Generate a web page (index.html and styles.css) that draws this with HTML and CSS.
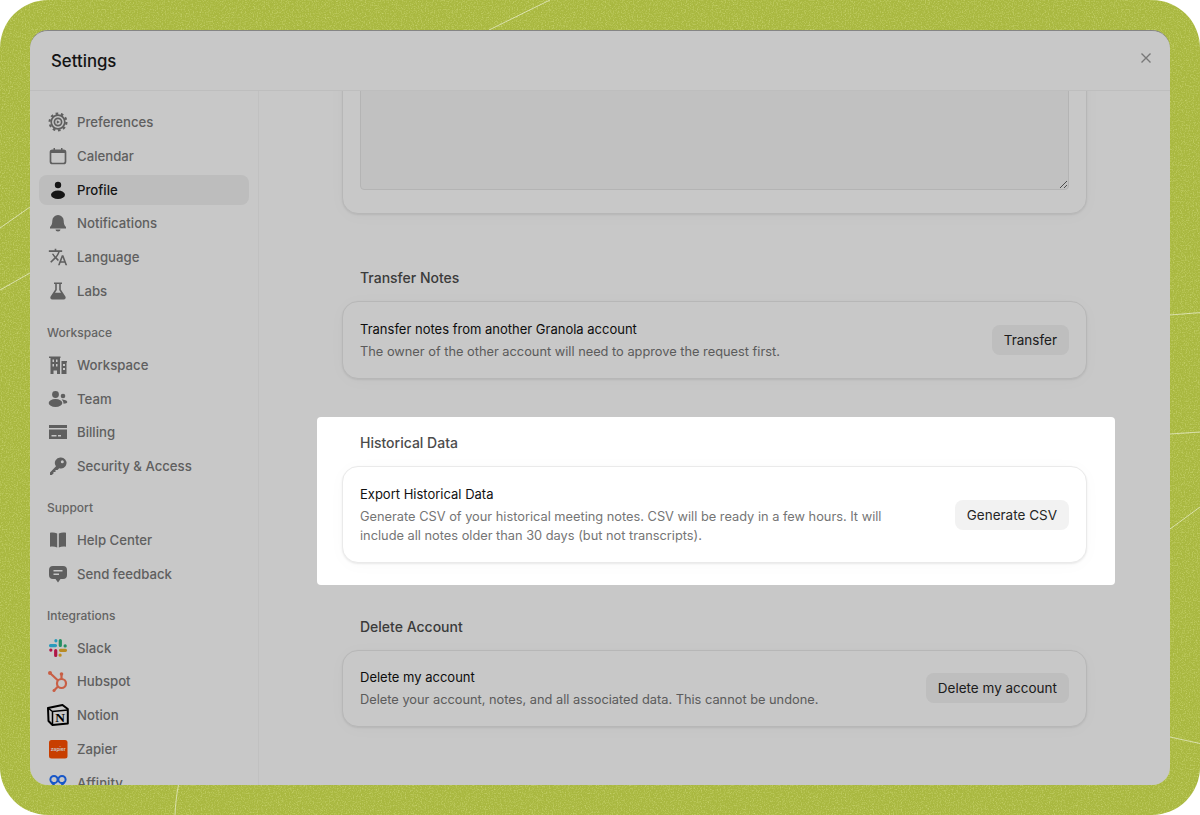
FILE: index.html
```html
<!DOCTYPE html>
<html lang="en">
<head>
<meta charset="utf-8">
<title>Settings</title>
<link rel="stylesheet" href="styles.css">
</head>
<body>
<div class="stage">
  <svg class="backdrop" width="1200" height="815" viewBox="0 0 1200 815" aria-hidden="true">
    <defs>
      <filter id="grain" x="0" y="0" width="100%" height="100%">
        <feTurbulence type="fractalNoise" baseFrequency="0.75" numOctaves="2" seed="4"/>
        <feColorMatrix type="matrix" values="0 0 0 0 0.95  0 0 0 0 1  0 0 0 0 0.5  1.6 0 0 0 -0.72"/>
      </filter>
    </defs>
    <rect class="grain" width="1200" height="815" filter="url(#grain)"/>
    <g class="streaks">
      <path d="M0 228L30 207"/>
      <path d="M0 290L30 273"/>
      <path d="M1170 315L1200 312.6"/>
      <path d="M1170 434L1200 432"/>
      <path d="M1170 529L1200 507"/>
      <path d="M1170 737L1200 743.5"/>
      <path d="M489 30L550 0"/>
      <path d="M178.500 785C176.500 795 175.500 805 175 815"/>
    </g>
  </svg>

  <div class="modal">
    <header class="modal-head">
      <h1 class="modal-title">Settings</h1>
      <button class="close" type="button" aria-label="Close">
        <svg width="10" height="10" viewBox="0 0 10 10"><path d="M.5.500l9 9M9.500.500l-9 9"/></svg>
      </button>
    </header>

    <div class="modal-body">
      <nav class="sidebar">
        <div class="nav-group">
          <a class="nav-item"><svg class="ic" viewBox="0 0 20 20"><circle class="line dash" cx="10" cy="10" r="8.400"/><circle class="line" cx="10" cy="10" r="6.800"/><circle class="line" cx="10" cy="10" r="3.600"/><path d="M8.800 8.300l3 1.700-3 1.700z"/></svg>Preferences</a>
          <a class="nav-item"><svg class="ic" viewBox="0 0 20 20"><rect class="line" x="2.500" y="4.300" width="15" height="13.200" rx="2"/><path d="M2.500 4.500h15V7h-15z"/><path d="M5.500 2h1.500v3H5.500zM13 2h1.500v3H13z"/></svg>Calendar</a>
          <a class="nav-item active"><svg class="ic" viewBox="0 0 20 20"><circle cx="10" cy="5" r="3.200"/><ellipse cx="10" cy="14.700" rx="7" ry="4.300"/></svg>Profile</a>
          <a class="nav-item"><svg class="ic" viewBox="0 0 20 20"><path d="M10 2a5.700 5.700 0 0 0-5.700 5.700c0 3.400-1 4.900-2.300 6.300v1.500h16V14c-1.300-1.400-2.300-2.900-2.300-6.300A5.700 5.700 0 0 0 10 2z"/><path d="M7.500 16.500a2.500 2 0 0 0 5 0z"/></svg>Notifications</a>
          <a class="nav-item"><svg class="ic" viewBox="0 0 24 24"><path d="M12.870 15.070l-2.540-2.510.03-.03c1.740-1.940 2.980-4.170 3.710-6.530H17V4h-7V2H8v2H1v1.990h11.170C11.500 7.920 10.440 9.750 9 11.350 8.070 10.320 7.300 9.190 6.690 8h-2c.73 1.630 1.730 3.170 2.980 4.560l-5.090 5.020L4 19l5-5 3.110 3.110.76-2.040zM18.500 10h-2L12 22h2l1.120-3h4.750L21 22h2l-4.500-12zm-2.620 7l1.620-4.330L19.120 17h-3.240z"/></svg>Language</a>
          <a class="nav-item"><svg class="ic" viewBox="0 0 20 20"><path d="M6 1.500h8V3h-1.200v5.500l4.600 7c.8 1.300 0 3-1.700 3H4.300c-1.700 0-2.500-1.700-1.700-3l4.600-7V3H6zM8.800 3v6l-1.800 2.700h6L11.200 9V3z" fill-rule="evenodd"/></svg>Labs</a>
        </div>
        <div class="nav-group">
          <h2 class="nav-label">Workspace</h2>
          <a class="nav-item"><svg class="ic" viewBox="0 0 20 20"><path fill-rule="evenodd" d="M1 1.500h11.500V3H12v16H9v-3.500H5.500V19h-3V3H1zM4.500 4.500V7H6V4.500zM8 4.500V7h1.500V4.500zM4.500 9v2.500H6V9zM8 9v2.500h1.500V9zM13.500 6H19v1.500h-.5V19h-5zM15 9v2h2V9zM15 13v2h2v-2z"/></svg>Workspace</a>
          <a class="nav-item"><svg class="ic" viewBox="0 0 20 20"><circle cx="7.500" cy="5.500" r="3.400"/><circle cx="15" cy="7" r="2.300"/><ellipse cx="7.500" cy="14" rx="6.800" ry="4"/><path d="M13.500 10.500c3 0 5.800 1 5.800 2.500 0 1-1.500 1.700-3.800 1.700 0-1.700-.7-3.200-2-4.200z"/></svg>Team</a>
          <a class="nav-item"><svg class="ic" viewBox="0 0 20 20"><path d="M1 3h18v3H1z"/><path fill-rule="evenodd" d="M1 7.500h18V17H1zM3.500 13v1.500h5V13zM10 13v1.500h3V13z"/></svg>Billing</a>
          <a class="nav-item"><svg class="ic" viewBox="0 0 20 20"><path fill-rule="evenodd" d="M13 1.500a5.500 5.500 0 1 1-1.800 10.700l-1.700 1.800H7.500v2H5.500v1.500L3.800 19H2v-2.500l6-6.200A5.500 5.500 0 0 1 13 1.500zM14.300 4.300a1.500 1.500 0 1 0 0 3 1.500 1.500 0 0 0 0-3z"/></svg>Security &amp; Access</a>
        </div>
        <div class="nav-group">
          <h2 class="nav-label">Support</h2>
          <a class="nav-item"><svg class="ic" viewBox="0 0 20 20"><path d="M2 2.800c2.500-.5 5-.3 7.200.7v14c-2.200-1-4.700-1.200-7.200-.7z"/><path d="M18 2.800c-2.500-.5-5-.3-7.200.7v14c2.200-1 4.700-1.200 7.200-.7z"/></svg>Help Center</a>
          <a class="nav-item"><svg class="ic" viewBox="0 0 20 20"><path fill-rule="evenodd" d="M5 2h10a4 4 0 0 1 4 4v5a4 4 0 0 1-4 4h-2.500L10 18.500 7.500 15H5a4 4 0 0 1-4-4V6a4 4 0 0 1 4-4zM5.500 6v1.500h9V6zM5.500 9.500V11H11V9.500z"/></svg>Send feedback</a>
        </div>
        <div class="nav-group">
          <h2 class="nav-label">Integrations</h2>
          <a class="nav-item"><svg class="ic" viewBox="0 0 20 20"><g class="slack"><path class="s-blue" d="M2.500 7.600h5M7.900 2.700v.1"/><path class="s-green" d="M12.300 2.500v5M17.200 7.900h-.1"/><path class="s-yellow" d="M17.500 12.300h-5M12.100 17.200v-.1"/><path class="s-red" d="M7.700 17.500v-5M2.800 12.100h.1"/></g></svg>Slack</a>
          <a class="nav-item"><svg class="ic hub" viewBox="0 0 20 20"><g class="hub-lines"><circle cx="13.500" cy="12.500" r="4.500"/><path d="M13.500 8V3.500M10 9.500L2.500 2.500M10 15.500L6 19.500"/></g><circle cx="13.500" cy="3" r="1.800"/><circle cx="2" cy="2" r="2"/><circle cx="6" cy="19.500" r="1.500"/></svg>Hubspot</a>
          <a class="nav-item"><svg class="ic notion" viewBox="0 0 20 20"><path class="notion-box" d="M0 3L14.500 0 19.800 4V18.500L4.500 20 .5 16z"/><path class="notion-edge" d="M0 3L4.500 6.500 19.800 5M4.500 6.500V20"/><text class="notion-n" x="12.200" y="17">N</text></svg>Notion</a>
          <a class="nav-item"><svg class="ic" viewBox="0 0 20 20"><rect class="zap" x="1" y="1" width="18.500" height="18.500" rx="2.500"/><text class="zap-t" x="10.250" y="12">zapier</text></svg>Zapier</a>
          <a class="nav-item"><svg class="ic" viewBox="0 0 20 20"><g class="aff"><circle cx="6" cy="6.500" r="3.600"/><circle cx="14" cy="6.500" r="3.600"/><path d="M3.500 9l6.500 8 6.500-8"/></g></svg>Affinity</a>
        </div>
      </nav>

      <main class="content">
        <section class="section section-top">
          <div class="card card-notes">
            <textarea class="notes" aria-label="Notes"></textarea>
          </div>
        </section>

        <section class="section">
          <h2 class="section-title">Transfer Notes</h2>
          <div class="card">
            <div class="card-text">
              <h3 class="card-title">Transfer notes from another Granola account</h3>
              <p class="card-desc">The owner of the other account will need to approve the request first.</p>
            </div>
            <button class="btn" type="button">Transfer</button>
          </div>
        </section>

        <section class="section focus">
          <h2 class="section-title">Historical Data</h2>
          <div class="card">
            <div class="card-text">
              <h3 class="card-title">Export Historical Data</h3>
              <p class="card-desc">Generate CSV of your historical meeting notes. CSV will be ready in a few hours. It will include all notes older than 30 days (but not transcripts).</p>
            </div>
            <button class="btn" type="button">Generate CSV</button>
          </div>
        </section>

        <section class="section section-delete">
          <h2 class="section-title">Delete Account</h2>
          <div class="card">
            <div class="card-text">
              <h3 class="card-title">Delete my account</h3>
              <p class="card-desc">Delete your account, notes, and all associated data. This cannot be undone.</p>
            </div>
            <button class="btn" type="button">Delete my account</button>
          </div>
        </section>
      </main>
    </div>
    <div class="dim"></div>
  </div>
</div>
</body>
</html>
```

FILE: styles.css
```css
* { box-sizing: border-box; }
html, body { margin: 0; height: 100%; background: #fff; }
body { font-family: Inter, "Liberation Sans", sans-serif; color: #1a1a1a; }
h1, h2, h3, p { margin: 0; }

.stage {
  position: relative;
  width: 1200px;
  height: 815px;
  padding: 30px;
  border-radius: 48px;
  overflow: hidden;
  background: #a9b840;
  display: flex;
}
.backdrop { position: absolute; inset: 0; }
.grain { opacity: .5; }
.streaks path { fill: none; stroke: #fff; stroke-opacity: .55; stroke-width: 1; }

.modal {
  position: relative;
  flex: 1;
  display: flex;
  flex-direction: column;
  background: #fff;
  border-top: 1px solid #858585;
  border-radius: 18px;
  overflow: hidden;
}
.dim { position: absolute; inset: 0; z-index: 1; background: rgba(0, 0, 0, .216); pointer-events: none; }

.modal-head {
  flex: none;
  height: 60px;
  padding: 0 19px 0 21px;
  display: flex;
  align-items: center;
  justify-content: space-between;
  border-bottom: 1px solid #f3f3f3;
}
.modal-title { font-size: 16.800px; font-weight: 500; line-height: 24px; color: #1a1a1a; }
.close { display: flex; margin-bottom: 6px; padding: 0; border: 0; background: none; }
.close path { fill: none; stroke: #9a9a9a; stroke-width: 1.4; }

.modal-body { flex: 1; min-height: 0; display: flex; }

.sidebar {
  flex: none;
  width: 229px;
  padding: 16px 9px 0;
  border-right: 1px solid #f6f6f6;
  overflow: hidden;
  display: flex;
  flex-direction: column;
  gap: 18px;
}
.nav-group { flex: none; display: flex; flex-direction: column; gap: 3.800px; }
.nav-label {
  height: 16px;
  margin-bottom: 6px;
  padding-left: 8px;
  font-size: 12px;
  font-weight: 500;
  line-height: 18px;
  color: #808080;
}
.nav-item {
  flex: none;
  height: 30px;
  padding-left: 9px;
  display: flex;
  align-items: center;
  gap: 9px;
  border-radius: 8px;
  font-size: 13.200px;
  font-weight: 500;
  color: #7a7a7a;
}
.nav-item.active { background: #f1f1f1; color: #1c1c1c; }

.ic { flex: none; width: 20px; height: 20px; fill: currentColor; overflow: visible; }
.line { fill: none; stroke: currentColor; stroke-width: 1.700; }
.dash { stroke-width: 2.200; stroke-dasharray: 2.600 2.680; }

.slack path { fill: none; stroke-width: 3.200; stroke-linecap: round; }
.s-blue { stroke: #36c5f0; }
.s-green { stroke: #2eb67d; }
.s-yellow { stroke: #ecb22e; }
.s-red { stroke: #e01e5a; }

.hub { fill: #ff7a59; }
.hub-lines { fill: none; stroke: #ff7a59; stroke-width: 2.200; }

.notion-box { fill: #fff; stroke: #000; stroke-width: 2; stroke-linejoin: round; }
.notion-edge { fill: none; stroke: #000; stroke-width: 1.500; }
.notion-n { font-family: "Liberation Serif", serif; font-size: 13.500px; font-weight: 700; fill: #000; text-anchor: middle; }

.zap { fill: #ff4f00; }
.zap-t { font-family: Inter, sans-serif; font-size: 5px; font-weight: 600; fill: #fff; text-anchor: middle; }

.aff { fill: none; stroke: #1f6fff; stroke-width: 2; }

.content {
  flex: 1;
  min-width: 0;
  padding-left: 58px;
  overflow: hidden;
  display: flex;
  flex-direction: column;
  gap: 15px;
}
.section {
  flex: none;
  width: 798px;
  padding: 16px 28px 23px 25px;
}
.section-top { padding-top: 0; margin-top: -30px; }
.section-delete { margin-top: 1px; }
.section-delete .card { padding-top: 16px; }
.focus {
  position: relative;
  z-index: 2;
  padding-bottom: 22px;
  background: #fff;
  border-radius: 4px;
}
.section-title {
  margin: 0 0 13px 18px;
  font-size: 14px;
  font-weight: 500;
  line-height: 20px;
  color: #4c4c4c;
}
.card {
  padding: 17px;
  display: flex;
  align-items: center;
  justify-content: space-between;
  border: 1px solid #eaeaea;
  border-radius: 16px;
  background: #fff;
  box-shadow: 0 1px 2px rgba(0, 0, 0, .08), 0 2px 18px rgba(0, 0, 0, .025);
}
.card-notes { display: block; height: 153px; padding-top: 0; padding-bottom: 0; }
.notes {
  display: block;
  width: 100%;
  height: 128px;
  margin: 0;
  border: 1px solid #e6e6e6;
  border-radius: 4px;
  background: #f6f6f6;
  outline: none;
}
.card-text { width: 540px; }
.card-title { font-size: 13px; font-weight: 400; line-height: 20px; color: #111; }
.card-desc { margin-top: 3px; font-size: 12.800px; font-weight: 400; line-height: 19px; color: #757575; }
.btn {
  flex: none;
  height: 30px;
  padding: 0 12px;
  border: 0;
  border-radius: 8px;
  background: #f2f2f2;
  font-family: inherit;
  font-size: 13.500px;
  font-weight: 400;
  color: #262626;
}
```
